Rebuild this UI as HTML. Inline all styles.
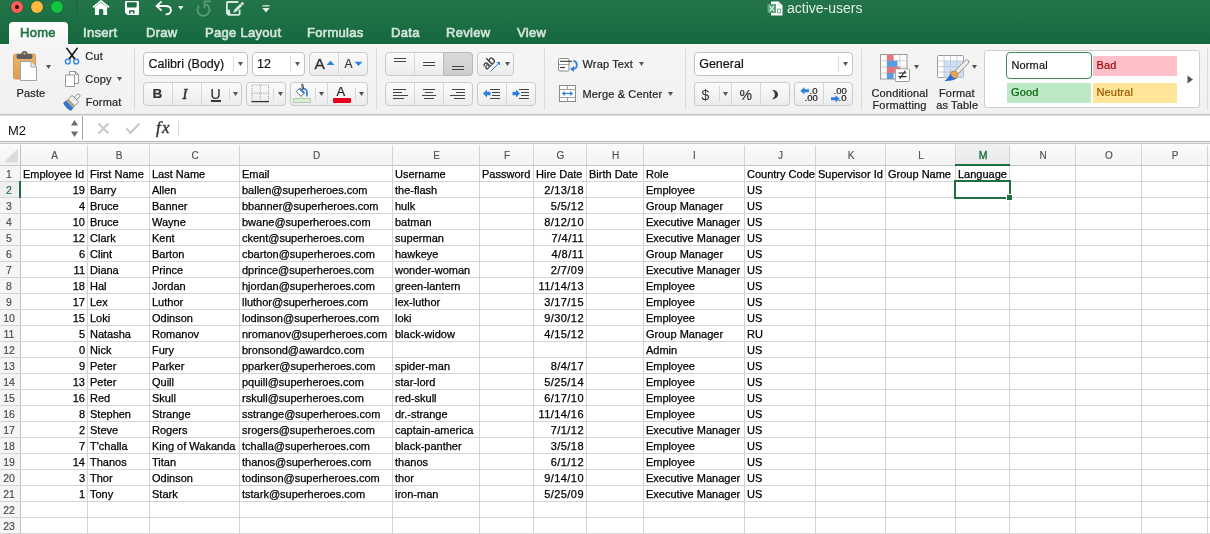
<!DOCTYPE html>
<html><head><meta charset="utf-8"><title>active-users</title>
<style>
*{box-sizing:border-box;margin:0;padding:0}
html,body{width:1210px;height:534px;overflow:hidden;background:#fff}
body{position:relative;font-family:"Liberation Sans",sans-serif;color:#000}
.a{position:absolute}
#root{position:absolute;left:0;top:0;width:1210px;height:534px;overflow:hidden;will-change:transform;background:#fff}
#title{position:absolute;left:0;top:0;width:1210px;height:44px;background:linear-gradient(#237549,#15673e)}
.tl{position:absolute;top:1px;width:12px;height:12px;border-radius:50%}
.tab{position:absolute;top:25px;font-size:13px;font-weight:normal;letter-spacing:0.3px;-webkit-text-stroke:0.6px currentColor;color:#d5e6dc;white-space:nowrap}
#ribbon{position:absolute;left:0;top:44px;width:1210px;height:70px;background:linear-gradient(#f5f5f5,#f1f1f1)}
#rbline{position:absolute;left:0;top:114px;width:1210px;height:1px;background:#c3c3c3;box-shadow:0 1px 0 #e2e2e2}
.rt{position:absolute;font-size:11px;color:#1a1a1a;white-space:nowrap}
.sep{position:absolute;top:48px;width:1px;height:61px;background:#dcdcdc}
.btn{position:absolute;border:1px solid #cacaca;border-radius:4px;background:linear-gradient(#fbfbfb,#ececec)}
.box{position:absolute;border:1px solid #c2c2c2;border-radius:4px;background:#fff}
.dv{position:absolute;width:1px;background:#d5d5d5}
.arr{position:absolute;width:0;height:0;border-left:3px solid transparent;border-right:3px solid transparent;border-top:4px solid #555}
#fbar{position:absolute;left:0;top:116px;width:1210px;height:25px;background:#fff}
.colhdr{position:absolute;left:0;width:1210px;background:linear-gradient(#fbfbfb,#f3f3f3)}
.rowhdr{position:absolute;left:0;width:20px;background:#f5f5f5}
.colsel{position:absolute;background:linear-gradient(#f2f2f2,#e9e9e9)}
.vl{position:absolute;width:1px;background:#d4d4d4}
.hl{position:absolute;height:1px;background:#d4d4d4}
.hb{background:#c6c6c6}
.cl{position:absolute;height:21px;line-height:23px;text-align:center;font-size:10px;color:#4f4f4f;padding-left:2px;-webkit-text-stroke:0.15px currentColor}
.cl.sel{color:#1e6e42;font-size:10.5px;-webkit-text-stroke:0.35px currentColor}
.rn{position:absolute;left:0;width:18px;height:16px;line-height:19px;text-align:center;font-size:10.5px;color:#4a4a4a;-webkit-text-stroke:0.15px currentColor}
.rn.sel{color:#1e6e42}
.c{position:absolute;height:16px;line-height:19px;font-size:11px;color:#000;white-space:nowrap;-webkit-text-stroke:0.25px #000}
.selbox{position:absolute;border:2px solid #1e6e42}
</style></head><body>

<div id="root">
<div id="title">
 <div class="tl" style="left:11px;background:#fc5f5b;box-shadow:0 0 0 0.6px #175a35"><div style="position:absolute;left:4px;top:3.8px;width:4px;height:4px;border-radius:50%;background:#3d0003"></div></div>
 <div class="tl" style="left:31px;background:#fdb93e;box-shadow:0 0 0 0.6px #175a35"></div>
 <div class="tl" style="left:51px;background:#10c440;box-shadow:0 0 0 0.6px #175a35"></div>
 <div class="a" style="left:76px;top:0;width:1px;height:16px;background:#1a6440"></div>

 <svg class="a" style="left:92px;top:0px" width="18" height="16"><path d="M0.9 7.4 L9 0.9 L17.1 7.4" stroke="#fff" stroke-width="1.7" fill="none"/><path d="M2.9 7 L9 2.6 L15.1 7 V15 H11.3 V10.2 Q11.3 8.7 9.1 8.7 Q6.9 8.7 6.9 10.2 V15 H2.9 Z" fill="#fff"/></svg>
 <svg class="a" style="left:124px;top:0px" width="16" height="16"><path d="M2.2 1 H13.8 Q15 1 15 2.2 V13.8 Q15 15 13.8 15 H3.4 L1 12.6 V2.2 Q1 1 2.2 1 Z" fill="#fff"/><path d="M2.9 2.2 H12.7 V6.8 Q12.7 7.6 11.9 7.6 H3.7 Q2.9 7.6 2.9 6.8 Z" fill="#1f6f44"/><path d="M5 13.8 V11.2 Q5 10.2 6 10.2 H9.6 Q10.6 10.2 10.6 11.2 V13.8 Z" fill="#1f6f44"/><path d="M6.4 13.8 V12.6 Q6.4 11.7 7.8 11.7 Q9.2 11.7 9.2 12.6 V13.8 Z" fill="#fff"/></svg>
 <svg class="a" style="left:155px;top:0px" width="18" height="16"><path d="M6.6 1.3 L1.6 6 L6.6 10.7" stroke="#fff" stroke-width="1.8" fill="none"/><path d="M2.2 6 H10.2 Q15.9 6 15.9 10.2 Q15.9 14.4 10.6 14.4" stroke="#fff" stroke-width="1.8" fill="none"/></svg>
 <svg class="a" style="left:178px;top:6px" width="6" height="4"><path d="M0 0 H5.5 L2.75 4Z" fill="#e8f0eb"/></svg>
 <svg class="a" style="left:196px;top:0px" width="16" height="17"><path d="M3 5.8 A6 6 0 1 0 8.6 3.9" stroke="#5c9b78" stroke-width="1.8" fill="none"/><path d="M8.5 8.2 V1.4 H14.8" stroke="#5c9b78" stroke-width="1.8" fill="none"/></svg>
 <svg class="a" style="left:225px;top:0px" width="20" height="16"><path d="M13.3 2 H3 Q1.9 2 1.9 3.1 V13.2 L3.4 14.9 H13.5 Q14.6 14.9 14.6 13.8 V9.5" stroke="#d9e8df" stroke-width="1.8" fill="none"/><path d="M1.9 9.5 H4.6 L5.6 13.9 L1.9 13.9Z" fill="#d9e8df"/><path d="M17.2 1.7 L19.2 3.7 L11.2 11.7 L8.2 12.8 L9.2 9.7 Z" fill="#d9e8df"/><path d="M15.4 3.5 L17.4 5.5" stroke="#1f6f44" stroke-width="0.8"/></svg>
 <svg class="a" style="left:262px;top:5px" width="8" height="8"><path d="M0.5 0.2 H7.5 V1.6 H0.5Z M0.3 2.9 H7.7 L4 7.4Z" fill="#e3eee7"/></svg>
 <svg class="a" style="left:767px;top:1px" width="16" height="15"><path d="M4 0.5 H11.5 L15.5 4.5 V14.5 H4Z" fill="#fff"/><path d="M11.5 0.5 V4.5 H15.5" fill="#ddd"/><rect x="0.5" y="3" width="8.5" height="9" fill="#5aa67a"/><path d="M2.5 5 L7 10 M7 5 L2.5 10" stroke="#fff" stroke-width="1.1"/><path d="M10.5 8 H13.5 V12 H10.5Z" fill="none" stroke="#5aa67a" stroke-width="0.9"/></svg>
 <div class="a" style="left:9px;top:22px;width:59px;height:22px;background:linear-gradient(#ffffff,#f5f5f5);border-radius:4px 4px 0 0"></div>
 <div class="tab" style="left:20px;color:#217346">Home</div>
 <div class="tab" style="left:83px">Insert</div>
 <div class="tab" style="left:146px">Draw</div>
 <div class="tab" style="left:205px">Page Layout</div>
 <div class="tab" style="left:307px">Formulas</div>
 <div class="tab" style="left:391px">Data</div>
 <div class="tab" style="left:446px">Review</div>
 <div class="tab" style="left:517px">View</div>
 <div class="a" style="left:787px;top:0px;font-size:14px;color:#e3efe7;white-space:nowrap">active-users</div>
</div>

<div id="ribbon"></div><div id="rbline"></div>
<svg class="a" style="left:12px;top:50px" width="26" height="32" viewBox="0 0 26 32"><defs><linearGradient id="gb" x1="0" y1="0" x2="0" y2="1"><stop offset="0" stop-color="#ecb46c"/><stop offset="1" stop-color="#dc9e52"/></linearGradient></defs><rect x="1.5" y="4" width="22" height="25" rx="1.8" fill="url(#gb)" stroke="#c98d45" stroke-width="0.8"/><path d="M4.5 5.5 Q4.5 4 6.5 4 H9.2 Q9.6 1 12.5 1 Q15.4 1 15.8 4 H18.5 Q20.5 4 20.5 5.5 V7.3 Q20.5 9 18.5 9 H6.5 Q4.5 9 4.5 7.3 Z" fill="#5e5e5e"/><ellipse cx="12.5" cy="3.6" rx="1.3" ry="1.1" fill="#e0a862"/><path d="M8.5 11.5 H19 L24.5 17 V30.5 H8.5 Z" fill="#fff" stroke="#9a9a9a" stroke-width="0.9"/><path d="M19 11.5 V17 H24.5" fill="#eee" stroke="#9a9a9a" stroke-width="0.9"/></svg>
<svg class="a" style="left:46px;top:65px" width="5" height="4"><path d="M0 0H5L2.5 4Z" fill="#555"/></svg>
<div class="a" style="left:16.5px;top:87.69px;font-size:11px;line-height:11px;color:#1f1f1f;white-space:nowrap;-webkit-text-stroke:0.2px #1f1f1f;letter-spacing:0.15px;">Paste</div>
<svg class="a" style="left:63px;top:47px" width="18" height="18" viewBox="0 0 18 18"><path d="M2.6 0.8 L4.4 0.8 L12.6 11.8 L11.2 12.8 Z M13.6 0.8 L15.4 0.8 L6.8 12.8 L5.4 11.8 Z" fill="#111"/><circle cx="4.8" cy="14.5" r="2.4" fill="#fff" stroke="#2f7fe0" stroke-width="1.4"/><circle cx="13.2" cy="14.5" r="2.4" fill="#fff" stroke="#2f7fe0" stroke-width="1.4"/></svg>
<div class="a" style="left:85.3px;top:50.69px;font-size:11px;line-height:11px;color:#1f1f1f;white-space:nowrap;-webkit-text-stroke:0.2px #1f1f1f;letter-spacing:0.15px;">Cut</div>
<svg class="a" style="left:64px;top:70px" width="16" height="18" viewBox="0 0 16 18"><path d="M5.5 1.5 H11.5 L14.5 4.5 V13.5 H5.5 Z" fill="#fff" stroke="#8c8c8c" stroke-width="0.9"/><path d="M11.5 1.5 V4.5 H14.5" fill="none" stroke="#8c8c8c" stroke-width="0.9"/><path d="M1.5 5 H10.5 V16.5 H1.5 Z" fill="#fff" stroke="#8c8c8c" stroke-width="0.9"/></svg>
<div class="a" style="left:85.3px;top:73.69px;font-size:11px;line-height:11px;color:#1f1f1f;white-space:nowrap;-webkit-text-stroke:0.2px #1f1f1f;letter-spacing:0.15px;">Copy</div>
<svg class="a" style="left:117px;top:77px" width="5" height="4"><path d="M0 0H5L2.5 4Z" fill="#555"/></svg>
<svg class="a" style="left:62px;top:93px" width="20" height="18" viewBox="0 0 20 18"><g transform="rotate(45 10 9)"><rect x="8.3" y="-1.5" width="3.4" height="6.5" rx="1.6" fill="#f4f4f4" stroke="#7a7a7a" stroke-width="0.8"/><rect x="5.3" y="4.2" width="9.4" height="5.6" rx="0.8" fill="#eeeeee" stroke="#7a7a7a" stroke-width="0.8"/><rect x="4.8" y="9.6" width="10.4" height="3" fill="#b9a489"/><path d="M4.6 12.4 H15.4 V15.6 Q10 17.6 4.6 15.6 Z" fill="#3177d6"/><path d="M4.6 15.2 Q10 17.2 15.4 15.2 V15.8 Q10 17.9 4.6 15.8Z" fill="#1d55aa"/></g></svg>
<div class="a" style="left:85.7px;top:96.69px;font-size:11px;line-height:11px;color:#1f1f1f;white-space:nowrap;-webkit-text-stroke:0.2px #1f1f1f;letter-spacing:0.15px;">Format</div>
<div class="a" style="left:134px;top:48px;width:1px;height:62px;background:#dadada"></div>
<div class="box" style="left:143px;top:52px;width:105px;height:24px;"></div>
<div class="a" style="left:233px;top:56px;width:1px;height:15px;background:#dedede"></div>
<svg class="a" style="left:238px;top:62px" width="5" height="4"><path d="M0 0H5L2.5 4Z" fill="#555"/></svg>
<div class="a" style="left:148.5px;top:58.02px;font-size:12.5px;line-height:12.5px;color:#111;white-space:nowrap;-webkit-text-stroke:0.2px #111;">Calibri (Body)</div>
<div class="box" style="left:252px;top:52px;width:53px;height:24px;"></div>
<div class="a" style="left:290px;top:56px;width:1px;height:15px;background:#dedede"></div>
<svg class="a" style="left:295px;top:62px" width="5" height="4"><path d="M0 0H5L2.5 4Z" fill="#555"/></svg>
<div class="a" style="left:257px;top:58.02px;font-size:12.5px;line-height:12.5px;color:#111;white-space:nowrap;-webkit-text-stroke:0.2px #111;">12</div>
<div class="btn" style="left:309px;top:52px;width:59px;height:24px;"></div>
<div class="a" style="left:338px;top:53px;width:1px;height:21px;background:#d6d6d6"></div>
<div class="a" style="left:314.5px;top:55.68px;font-size:15.5px;line-height:15.5px;color:#333;white-space:nowrap;-webkit-text-stroke:0.2px #333;-webkit-text-stroke:0.35px #333">A</div>
<svg class="a" style="left:326px;top:60px" width="9" height="6" viewBox="0 0 9 6"><path d="M0.5 5 L4.5 0.8 L8.5 5Z" fill="#2f7fe0"/></svg>
<div class="a" style="left:344.5px;top:58.04px;font-size:12px;line-height:12px;color:#333;white-space:nowrap;-webkit-text-stroke:0.2px #333;">A</div>
<svg class="a" style="left:354px;top:61px" width="9" height="6" viewBox="0 0 9 6"><path d="M0.5 0.8 L4.5 5 L8.5 0.8Z" fill="#2f7fe0"/></svg>
<div class="btn" style="left:143px;top:82px;width:99px;height:24px;"></div>
<div class="a" style="left:172px;top:83px;width:1px;height:22px;background:#d6d6d6"></div>
<div class="a" style="left:201px;top:83px;width:1px;height:22px;background:#d6d6d6"></div>
<div class="a" style="left:229px;top:88px;width:1px;height:12px;background:#d6d6d6"></div>
<div class="a" style="left:152.5px;top:87.37px;font-size:13.5px;line-height:13.5px;color:#333;white-space:nowrap;-webkit-text-stroke:0.2px #333;font-weight:bold">B</div>
<div class="a" style="left:182.5px;top:86.73px;font-size:14.5px;line-height:14.5px;color:#333;white-space:nowrap;-webkit-text-stroke:0.2px #333;font-family:'Liberation Serif',serif;font-style:italic;-webkit-text-stroke:0.5px #333">I</div>
<div class="a" style="left:210.5px;top:86.95px;font-size:14px;line-height:14px;color:#333;white-space:nowrap;-webkit-text-stroke:0.2px #333;">U</div>
<div class="a" style="left:211px;top:100px;width:10px;height:1.5px;background:#333"></div>
<svg class="a" style="left:232.5px;top:92px" width="5" height="4"><path d="M0 0H5L2.5 4Z" fill="#555"/></svg>
<div class="btn" style="left:246px;top:82px;width:40px;height:24px;"></div>
<div class="a" style="left:273px;top:88px;width:1px;height:12px;background:#d6d6d6"></div>
<svg class="a" style="left:251px;top:84px" width="19" height="19" viewBox="0 0 19 19"><rect x="1" y="1" width="16.5" height="16.5" fill="none" stroke="#888" stroke-width="0.9" stroke-dasharray="1 1.3"/><path d="M9.25 1 V17.5 M1 9.25 H17.5" stroke="#888" stroke-width="0.9" stroke-dasharray="1 1.3"/><path d="M0.5 17.6 H18" stroke="#333" stroke-width="1.3"/></svg>
<svg class="a" style="left:277.5px;top:92px" width="5" height="4"><path d="M0 0H5L2.5 4Z" fill="#555"/></svg>
<div class="btn" style="left:290px;top:82px;width:78px;height:24px;"></div>
<div class="a" style="left:315px;top:88px;width:1px;height:12px;background:#d6d6d6"></div>
<div class="a" style="left:327px;top:83px;width:1px;height:22px;background:#d6d6d6"></div>
<div class="a" style="left:355px;top:88px;width:1px;height:12px;background:#d6d6d6"></div>
<svg class="a" style="left:294px;top:83px" width="16" height="15" viewBox="0 0 16 15"><path d="M2.2 8.5 L6.9 13.4 L10.8 9.9 L5.9 5.2 Z" fill="#fff" stroke="#5a5a5a" stroke-width="0.9" stroke-linejoin="round"/><path d="M5.8 5.9 L10.1 10" stroke="#2f7fe0" stroke-width="1.9"/><path d="M8.6 6.8 Q7.2 1.2 8.2 0.9 Q9.4 0.6 9.5 6.5" stroke="#333" stroke-width="0.9" fill="none"/><path d="M10.6 5.8 Q13.6 6.2 12.9 12.6" stroke="#2f7fe0" stroke-width="1.7" fill="none" stroke-linecap="round"/></svg>
<div class="a" style="left:293px;top:98px;width:18px;height:5px;background:#dcecd6;border:0.5px solid #b5cfad"></div>
<svg class="a" style="left:319px;top:92px" width="5" height="4"><path d="M0 0H5L2.5 4Z" fill="#555"/></svg>
<div class="a" style="left:336.5px;top:84.80px;font-size:13px;line-height:13px;color:#222;white-space:nowrap;-webkit-text-stroke:0.2px #222;">A</div>
<div class="a" style="left:333px;top:98px;width:18px;height:5px;background:#e8001d;border-radius:1px"></div>
<svg class="a" style="left:359px;top:92px" width="5" height="4"><path d="M0 0H5L2.5 4Z" fill="#555"/></svg>
<div class="a" style="left:376px;top:48px;width:1px;height:62px;background:#dadada"></div>
<div class="btn" style="left:385px;top:52px;width:88px;height:24px;"></div>
<div class="a" style="left:443px;top:52px;width:30px;height:24px;border:1px solid #b9b9b9;border-radius:0 4px 4px 0;background:linear-gradient(#dadada,#cdcdcd)"></div>
<div class="a" style="left:414px;top:53px;width:1px;height:22px;background:#d6d6d6"></div>
<div class="a" style="left:394px;top:57.8px;width:12px;height:1.2px;background:#444"></div>
<div class="a" style="left:394px;top:61px;width:12px;height:1.2px;background:#444"></div>
<div class="a" style="left:423px;top:62px;width:12px;height:1.2px;background:#444"></div>
<div class="a" style="left:423px;top:65.2px;width:12px;height:1.2px;background:#444"></div>
<div class="a" style="left:452px;top:66px;width:12px;height:1.2px;background:#444"></div>
<div class="a" style="left:452px;top:69.2px;width:12px;height:1.2px;background:#444"></div>
<div class="btn" style="left:477px;top:52px;width:37px;height:24px;"></div>
<svg class="a" style="left:482px;top:56px" width="20" height="17" viewBox="0 0 20 17"><text x="0" y="0" transform="translate(4.8 14.2) rotate(-45)" font-family="Liberation Sans" font-size="12" fill="#333" stroke="#333" stroke-width="0.3">ab</text><path d="M8.5 15.5 L17.5 6.5" stroke="#2f7fe0" stroke-width="1"/><path d="M14.5 6 L18 6 L18 9.5Z" fill="#2f7fe0"/></svg>
<svg class="a" style="left:505px;top:62px" width="5" height="4"><path d="M0 0H5L2.5 4Z" fill="#555"/></svg>
<div class="btn" style="left:385px;top:82px;width:88px;height:24px;"></div>
<div class="a" style="left:414px;top:83px;width:1px;height:22px;background:#d6d6d6"></div>
<div class="a" style="left:443px;top:83px;width:1px;height:22px;background:#d6d6d6"></div>
<div class="a" style="left:393px;top:89px;width:13px;height:1.2px;background:#444"></div>
<div class="a" style="left:393px;top:92px;width:9px;height:1.2px;background:#444"></div>
<div class="a" style="left:393px;top:95px;width:15px;height:1.2px;background:#444"></div>
<div class="a" style="left:393px;top:98px;width:11px;height:1.2px;background:#444"></div>
<div class="a" style="left:423px;top:89px;width:12px;height:1.2px;background:#444"></div>
<div class="a" style="left:425px;top:92px;width:8px;height:1.2px;background:#444"></div>
<div class="a" style="left:422px;top:95px;width:14px;height:1.2px;background:#444"></div>
<div class="a" style="left:424px;top:98px;width:10px;height:1.2px;background:#444"></div>
<div class="a" style="left:452px;top:89px;width:13px;height:1.2px;background:#444"></div>
<div class="a" style="left:456px;top:92px;width:9px;height:1.2px;background:#444"></div>
<div class="a" style="left:450px;top:95px;width:15px;height:1.2px;background:#444"></div>
<div class="a" style="left:454px;top:98px;width:11px;height:1.2px;background:#444"></div>
<div class="btn" style="left:477px;top:82px;width:59px;height:24px;"></div>
<div class="a" style="left:506px;top:83px;width:1px;height:22px;background:#d6d6d6"></div>
<svg class="a" style="left:483px;top:89px" width="8" height="9" viewBox="0 0 8 9"><path d="M0 4.5 L4 0.5 V2.8 H7.5 V6.2 H4 V8.5 Z" fill="#2f7fe0"/></svg>
<div class="a" style="left:490px;top:89px;width:10px;height:1.2px;background:#444"></div>
<div class="a" style="left:492px;top:92px;width:8px;height:1.2px;background:#444"></div>
<div class="a" style="left:492px;top:95px;width:8px;height:1.2px;background:#444"></div>
<div class="a" style="left:490px;top:98px;width:10px;height:1.2px;background:#444"></div>
<svg class="a" style="left:512px;top:89px" width="8" height="9" viewBox="0 0 8 9"><path d="M8 4.5 L4 0.5 V2.8 H0.5 V6.2 H4 V8.5 Z" fill="#2f7fe0"/></svg>
<div class="a" style="left:519px;top:89px;width:10px;height:1.2px;background:#444"></div>
<div class="a" style="left:521px;top:92px;width:8px;height:1.2px;background:#444"></div>
<div class="a" style="left:521px;top:95px;width:8px;height:1.2px;background:#444"></div>
<div class="a" style="left:519px;top:98px;width:10px;height:1.2px;background:#444"></div>
<div class="a" style="left:544px;top:48px;width:1px;height:62px;background:#dadada"></div>
<svg class="a" style="left:557px;top:57px" width="23" height="15" viewBox="0 0 23 15"><rect x="1.5" y="1.5" width="10.5" height="12.5" rx="1" fill="#fff" stroke="#8a8a8a" stroke-width="1"/><path d="M1.5 7.5 H12" stroke="#8a8a8a" stroke-width="0.8"/><path d="M3 4.3 H15" stroke="#333" stroke-width="1.1"/><path d="M3 10.5 H8" stroke="#333" stroke-width="1.1"/><path d="M16.5 3.5 Q21 5.5 19.5 10 Q18.5 12 16 12" stroke="#2f7fe0" stroke-width="1.8" fill="none"/><path d="M13 12 L17 9 L17 15 Z" fill="#2f7fe0"/></svg>
<div class="a" style="left:582.5px;top:58.69px;font-size:11px;line-height:11px;color:#1f1f1f;white-space:nowrap;-webkit-text-stroke:0.2px #1f1f1f;letter-spacing:0.15px;">Wrap Text</div>
<svg class="a" style="left:639px;top:62px" width="5" height="4"><path d="M0 0H5L2.5 4Z" fill="#555"/></svg>
<svg class="a" style="left:558px;top:84px" width="19" height="19" viewBox="0 0 19 19"><rect x="1.5" y="1.5" width="16" height="16" fill="#fff" stroke="#8a8a8a" stroke-width="1"/><path d="M1.5 5.5 H17.5 M1.5 13.5 H17.5 M9.5 1.5 V5.5 M9.5 13.5 V17.5" stroke="#a0a0a0" stroke-width="1"/><path d="M6 9.5 H13" stroke="#2f7fe0" stroke-width="1.3"/><path d="M3.8 9.5 L6.8 7 V12Z M15.2 9.5 L12.2 7 V12Z" fill="#2f7fe0"/></svg>
<div class="a" style="left:582.5px;top:88.89px;font-size:11px;line-height:11px;color:#1f1f1f;white-space:nowrap;-webkit-text-stroke:0.2px #1f1f1f;letter-spacing:0.15px;">Merge &amp; Center</div>
<svg class="a" style="left:668px;top:92px" width="5" height="4"><path d="M0 0H5L2.5 4Z" fill="#555"/></svg>
<div class="a" style="left:685px;top:48px;width:1px;height:62px;background:#dadada"></div>
<div class="box" style="left:694px;top:52px;width:159px;height:24px;"></div>
<div class="a" style="left:838px;top:56px;width:1px;height:16px;background:#dedede"></div>
<svg class="a" style="left:843px;top:62px" width="5" height="4"><path d="M0 0H5L2.5 4Z" fill="#555"/></svg>
<div class="a" style="left:699.2px;top:58.22px;font-size:12.5px;line-height:12.5px;color:#111;white-space:nowrap;-webkit-text-stroke:0.2px #111;">General</div>
<div class="btn" style="left:694px;top:82px;width:96px;height:24px;"></div>
<div class="a" style="left:719px;top:86px;width:1px;height:16px;background:#d6d6d6"></div>
<div class="a" style="left:731px;top:83px;width:1px;height:22px;background:#d6d6d6"></div>
<div class="a" style="left:760px;top:83px;width:1px;height:22px;background:#d6d6d6"></div>
<div class="a" style="left:701.5px;top:87.65px;font-size:14px;line-height:14px;color:#333;white-space:nowrap;-webkit-text-stroke:0.2px #333;-webkit-text-stroke:0px">$</div>
<svg class="a" style="left:723px;top:92px" width="5" height="4"><path d="M0 0H5L2.5 4Z" fill="#555"/></svg>
<div class="a" style="left:739.5px;top:87.65px;font-size:14px;line-height:14px;color:#333;white-space:nowrap;-webkit-text-stroke:0.2px #333;">%</div>
<svg class="a" style="left:770px;top:89px" width="9" height="11" viewBox="0 0 9 11"><path d="M2 0.8 Q8 1.5 8 5.5 Q8 9.5 2 10.5 Q5 8 5 5.5 Q5 3 2 0.8Z" fill="#333"/></svg>
<div class="btn" style="left:794px;top:82px;width:59px;height:24px;"></div>
<div class="a" style="left:823px;top:83px;width:1px;height:22px;background:#d6d6d6"></div>
<svg class="a" style="left:800px;top:86.5px" width="10" height="8" viewBox="0 0 10 8"><path d="M0.3 3.8 L4.5 0.2 V2.3 H9 V5.3 H4.5 V7.4 Z" fill="#2f7fe0"/></svg>
<div class="a" style="left:809.5px;top:85.56px;font-size:9.5px;line-height:9.5px;color:#222;white-space:nowrap;-webkit-text-stroke:0.2px #222;">.0</div>
<div class="a" style="left:804.5px;top:92.56px;font-size:9.5px;line-height:9.5px;color:#222;white-space:nowrap;-webkit-text-stroke:0.2px #222;">.00</div>
<div class="a" style="left:833.5px;top:85.56px;font-size:9.5px;line-height:9.5px;color:#222;white-space:nowrap;-webkit-text-stroke:0.2px #222;">.00</div>
<svg class="a" style="left:829.5px;top:94.5px" width="10" height="8" viewBox="0 0 10 8"><path d="M9.7 3.8 L5.5 0.2 V2.3 H1 V5.3 H5.5 V7.4 Z" fill="#2f7fe0"/></svg>
<div class="a" style="left:838.5px;top:92.56px;font-size:9.5px;line-height:9.5px;color:#222;white-space:nowrap;-webkit-text-stroke:0.2px #222;">.0</div>
<div class="a" style="left:861px;top:48px;width:1px;height:62px;background:#dadada"></div>
<svg class="a" style="left:879px;top:53px" width="32" height="30" viewBox="0 0 32 30"><rect x="1.5" y="1.5" width="26.5" height="24.5" fill="#fff" stroke="#9a9a9a" stroke-width="1"/><path d="M8 1.5 V26 M14.2 1.5 V26 M20.8 1.5 V26 M1.5 7.7 H28 M1.5 13.9 H28 M1.5 20 H28" stroke="#c4c4c4" stroke-width="0.8"/><rect x="8" y="1.5" width="6.5" height="6.4" fill="#e8747b"/><rect x="8" y="7.7" width="10.5" height="6.3" fill="#5b9be6"/><rect x="8" y="13.9" width="13" height="6.2" fill="#e8747b"/><rect x="8" y="20" width="6.5" height="6" fill="#5b9be6"/><rect x="16.3" y="15.8" width="14.2" height="12.7" rx="0.8" fill="#fff" stroke="#8f8f8f" stroke-width="0.9"/><path d="M19.5 20 H27.5 M19.5 23.6 H27.5 M26.3 17.8 L20.7 25.8" stroke="#222" stroke-width="1.1"/></svg>
<svg class="a" style="left:914px;top:65px" width="5" height="4"><path d="M0 0H5L2.5 4Z" fill="#555"/></svg>
<div class="a" style="left:871.5px;top:87.69px;font-size:11px;line-height:11px;color:#1f1f1f;white-space:nowrap;-webkit-text-stroke:0.2px #1f1f1f;letter-spacing:0.15px;">Conditional</div>
<div class="a" style="left:872.5px;top:99.99px;font-size:11px;line-height:11px;color:#1f1f1f;white-space:nowrap;-webkit-text-stroke:0.2px #1f1f1f;letter-spacing:0.15px;">Formatting</div>
<svg class="a" style="left:936px;top:54px" width="36" height="28" viewBox="0 0 36 28"><rect x="1.5" y="1.5" width="26" height="22" rx="1" fill="#fff" stroke="#9a9a9a" stroke-width="1"/><rect x="8" y="7" width="19.5" height="16.5" fill="#cfe0f5"/><path d="M8 1.5 V23.5 M14.5 1.5 V23.5 M21 1.5 V23.5 M1.5 7 H27.5 M1.5 12.5 H27.5 M1.5 18 H27.5" stroke="#b8c4d2" stroke-width="0.8"/><path d="M31.5 6 Q34 6.5 32.5 9 L21.5 20.5 L18.5 17.5 L29.5 6.2 Q30.5 5.5 31.5 6Z" fill="#eee" stroke="#8a8a8a" stroke-width="0.9"/><circle cx="18" cy="21" r="4" fill="#e3a55a" stroke="#b9833f" stroke-width="0.7"/><path d="M14.5 19.5 Q16 24.5 21 24 Q17 27.5 8.5 27 Q12.5 24 14.5 19.5Z" fill="#2f6fd0"/></svg>
<svg class="a" style="left:972px;top:65px" width="5" height="4"><path d="M0 0H5L2.5 4Z" fill="#555"/></svg>
<div class="a" style="left:939px;top:87.69px;font-size:11px;line-height:11px;color:#1f1f1f;white-space:nowrap;-webkit-text-stroke:0.2px #1f1f1f;letter-spacing:0.15px;">Format</div>
<div class="a" style="left:936.2px;top:99.99px;font-size:11px;line-height:11px;color:#1f1f1f;white-space:nowrap;-webkit-text-stroke:0.2px #1f1f1f;letter-spacing:0.15px;">as Table</div>
<div class="a" style="left:984px;top:50px;width:216px;height:58px;background:#fff;border:1px solid #cfcfcf;border-radius:3px"></div>
<div class="a" style="left:1006px;top:52px;width:86px;height:27px;background:#fff;border:1.5px solid #3e8a5c;border-radius:4px"></div>
<div class="a" style="left:1093px;top:56px;width:84px;height:20px;background:#ffc0c9"></div>
<div class="a" style="left:1007px;top:83px;width:84px;height:20px;background:#bde9c6"></div>
<div class="a" style="left:1093px;top:83px;width:84px;height:20px;background:#fee598"></div>
<div class="a" style="left:1011.4px;top:59.99px;font-size:11px;line-height:11px;color:#111;white-space:nowrap;-webkit-text-stroke:0.2px #111;letter-spacing:0.15px;">Normal</div>
<div class="a" style="left:1096.5px;top:59.99px;font-size:11px;line-height:11px;color:#9c0006;white-space:nowrap;-webkit-text-stroke:0.2px #9c0006;letter-spacing:0.15px;">Bad</div>
<div class="a" style="left:1011px;top:86.99px;font-size:11px;line-height:11px;color:#006100;white-space:nowrap;-webkit-text-stroke:0.2px #006100;letter-spacing:0.15px;">Good</div>
<div class="a" style="left:1096.5px;top:86.99px;font-size:11px;line-height:11px;color:#9c5700;white-space:nowrap;-webkit-text-stroke:0.2px #9c5700;letter-spacing:0.15px;">Neutral</div>
<svg class="a" style="left:1187px;top:75px" width="7" height="9" viewBox="0 0 7 9"><path d="M0.5 0.5 L6 4.5 L0.5 8.5Z" fill="#555"/></svg>
<div class="a" style="left:1207px;top:48px;width:1px;height:62px;background:#dadada"></div>
<div id="fbar"></div>
<div class="a" style="left:82px;top:116px;width:1.2px;height:24px;background:#a8a8a8"></div>
<div class="a" style="left:0;top:141px;width:1210px;height:1px;background:#b4b4b4"></div>
<div class="a" style="left:0;top:142px;width:1210px;height:1px;background:#f2f2f2"></div>
<div class="a" style="left:0;top:143px;width:1210px;height:1px;background:#c4c4c4"></div>
<div class="a" style="left:8px;top:123.5px;font-size:13px;line-height:13px;color:#111;white-space:nowrap">M2</div>
<svg class="a" style="left:70px;top:119px" width="9" height="19"><path d="M1 6.5 L4.5 1 L8 6.5Z M1 12.5 L4.5 18 L8 12.5Z" fill="#6a6a6a"/></svg>
<svg class="a" style="left:97px;top:122px" width="13" height="13"><path d="M1.5 1.5 L11.5 11.5 M11.5 1.5 L1.5 11.5" stroke="#c8c8c8" stroke-width="2"/></svg>
<svg class="a" style="left:125px;top:122px" width="16" height="13"><path d="M1.5 6.5 L5.5 11 L14.5 1.5" stroke="#c8c8c8" stroke-width="2.1" fill="none"/></svg>
<div class="a" style="left:156px;top:118.5px;font-family:'Liberation Serif',serif;font-style:italic;font-size:17px;line-height:17px;color:#333;white-space:nowrap;letter-spacing:1.3px;-webkit-text-stroke:0.4px #333">fx</div>
<div class="a" style="left:178px;top:121px;width:1px;height:15px;background:#d8d8d8"></div>

<div class="colhdr" style="top:144px;height:21px"></div>
<svg class="a" style="left:3px;top:148px" width="16" height="15"><path d="M15 0.5 V14.5 H0.5Z" fill="#dcdcdc"/></svg>
<div class="rowhdr" style="top:165px;height:369px"></div>
<div class="colsel" style="left:955px;top:144px;width:54px;height:21px"></div>
<div class="a" style="left:0;top:181px;width:20px;height:16px;background:#efefef"></div>
<div class="vl" style="left:20px;top:145px;height:389px;background:#c2c2c2;"></div>
<div class="vl" style="left:87px;top:145px;height:389px;"></div>
<div class="vl" style="left:149px;top:145px;height:389px;"></div>
<div class="vl" style="left:239px;top:145px;height:389px;"></div>
<div class="vl" style="left:392px;top:145px;height:389px;"></div>
<div class="vl" style="left:479px;top:145px;height:389px;"></div>
<div class="vl" style="left:533px;top:145px;height:389px;"></div>
<div class="vl" style="left:586px;top:145px;height:389px;"></div>
<div class="vl" style="left:643px;top:145px;height:389px;"></div>
<div class="vl" style="left:744px;top:145px;height:389px;"></div>
<div class="vl" style="left:815px;top:145px;height:389px;"></div>
<div class="vl" style="left:885px;top:145px;height:389px;"></div>
<div class="vl" style="left:955px;top:145px;height:389px;"></div>
<div class="vl" style="left:1009px;top:145px;height:389px;"></div>
<div class="vl" style="left:1075px;top:145px;height:389px;"></div>
<div class="vl" style="left:1141px;top:145px;height:389px;"></div>
<div class="vl" style="left:1207px;top:145px;height:389px;"></div>
<div class="hl hb" style="left:0;top:165px;width:1210px"></div>
<div class="hl" style="left:0;top:181px;width:1210px"></div>
<div class="hl" style="left:0;top:197px;width:1210px"></div>
<div class="hl" style="left:0;top:213px;width:1210px"></div>
<div class="hl" style="left:0;top:229px;width:1210px"></div>
<div class="hl" style="left:0;top:245px;width:1210px"></div>
<div class="hl" style="left:0;top:261px;width:1210px"></div>
<div class="hl" style="left:0;top:277px;width:1210px"></div>
<div class="hl" style="left:0;top:293px;width:1210px"></div>
<div class="hl" style="left:0;top:309px;width:1210px"></div>
<div class="hl" style="left:0;top:325px;width:1210px"></div>
<div class="hl" style="left:0;top:341px;width:1210px"></div>
<div class="hl" style="left:0;top:357px;width:1210px"></div>
<div class="hl" style="left:0;top:373px;width:1210px"></div>
<div class="hl" style="left:0;top:389px;width:1210px"></div>
<div class="hl" style="left:0;top:405px;width:1210px"></div>
<div class="hl" style="left:0;top:421px;width:1210px"></div>
<div class="hl" style="left:0;top:437px;width:1210px"></div>
<div class="hl" style="left:0;top:453px;width:1210px"></div>
<div class="hl" style="left:0;top:469px;width:1210px"></div>
<div class="hl" style="left:0;top:485px;width:1210px"></div>
<div class="hl" style="left:0;top:501px;width:1210px"></div>
<div class="hl" style="left:0;top:517px;width:1210px"></div>
<div class="hl" style="left:0;top:533px;width:1210px"></div>
<div class="cl" style="left:20px;width:67px;top:144px">A</div>
<div class="cl" style="left:87px;width:62px;top:144px">B</div>
<div class="cl" style="left:149px;width:90px;top:144px">C</div>
<div class="cl" style="left:239px;width:153px;top:144px">D</div>
<div class="cl" style="left:392px;width:87px;top:144px">E</div>
<div class="cl" style="left:479px;width:54px;top:144px">F</div>
<div class="cl" style="left:533px;width:53px;top:144px">G</div>
<div class="cl" style="left:586px;width:57px;top:144px">H</div>
<div class="cl" style="left:643px;width:101px;top:144px">I</div>
<div class="cl" style="left:744px;width:71px;top:144px">J</div>
<div class="cl" style="left:815px;width:70px;top:144px">K</div>
<div class="cl" style="left:885px;width:70px;top:144px">L</div>
<div class="cl sel" style="left:955px;width:54px;top:144px">M</div>
<div class="cl" style="left:1009px;width:66px;top:144px">N</div>
<div class="cl" style="left:1075px;width:66px;top:144px">O</div>
<div class="cl" style="left:1141px;width:66px;top:144px">P</div>
<div style="position:absolute;left:955px;top:164px;width:55px;height:2px;background:#1e6e42"></div>
<div class="rn" style="top:165px">1</div>
<div class="rn sel" style="top:181px">2</div>
<div class="rn" style="top:197px">3</div>
<div class="rn" style="top:213px">4</div>
<div class="rn" style="top:229px">5</div>
<div class="rn" style="top:245px">6</div>
<div class="rn" style="top:261px">7</div>
<div class="rn" style="top:277px">8</div>
<div class="rn" style="top:293px">9</div>
<div class="rn" style="top:309px">10</div>
<div class="rn" style="top:325px">11</div>
<div class="rn" style="top:341px">12</div>
<div class="rn" style="top:357px">13</div>
<div class="rn" style="top:373px">14</div>
<div class="rn" style="top:389px">15</div>
<div class="rn" style="top:405px">16</div>
<div class="rn" style="top:421px">17</div>
<div class="rn" style="top:437px">18</div>
<div class="rn" style="top:453px">19</div>
<div class="rn" style="top:469px">20</div>
<div class="rn" style="top:485px">21</div>
<div class="rn" style="top:501px">22</div>
<div class="rn" style="top:517px">23</div>
<div style="position:absolute;left:19px;top:181px;width:2px;height:17px;background:#1e6e42"></div>
<div class="c" style="top:165px;left:23px">Employee Id</div>
<div class="c" style="top:165px;left:90px">First Name</div>
<div class="c" style="top:165px;left:152px">Last Name</div>
<div class="c" style="top:165px;left:242px">Email</div>
<div class="c" style="top:165px;left:395px">Username</div>
<div class="c" style="top:165px;left:482px">Password</div>
<div class="c" style="top:165px;left:536px">Hire Date</div>
<div class="c" style="top:165px;left:589px">Birth Date</div>
<div class="c" style="top:165px;left:646px">Role</div>
<div class="c" style="top:165px;left:747px">Country Code</div>
<div class="c" style="top:165px;left:818px">Supervisor Id</div>
<div class="c" style="top:165px;left:888px">Group Name</div>
<div class="c" style="top:165px;left:958px">Language</div>
<div class="c r" style="top:181px;right:1125px;">19</div>
<div class="c" style="top:181px;left:90px">Barry</div>
<div class="c" style="top:181px;left:152px">Allen</div>
<div class="c" style="top:181px;left:242px">ballen@superheroes.com</div>
<div class="c" style="top:181px;left:395px">the-flash</div>
<div class="c r" style="top:181px;right:626px;letter-spacing:0.45px;">2/13/18</div>
<div class="c" style="top:181px;left:646px">Employee</div>
<div class="c" style="top:181px;left:747px">US</div>
<div class="c r" style="top:197px;right:1125px;">4</div>
<div class="c" style="top:197px;left:90px">Bruce</div>
<div class="c" style="top:197px;left:152px">Banner</div>
<div class="c" style="top:197px;left:242px">bbanner@superheroes.com</div>
<div class="c" style="top:197px;left:395px">hulk</div>
<div class="c r" style="top:197px;right:626px;letter-spacing:0.45px;">5/5/12</div>
<div class="c" style="top:197px;left:646px">Group Manager</div>
<div class="c" style="top:197px;left:747px">US</div>
<div class="c r" style="top:213px;right:1125px;">10</div>
<div class="c" style="top:213px;left:90px">Bruce</div>
<div class="c" style="top:213px;left:152px">Wayne</div>
<div class="c" style="top:213px;left:242px">bwane@superheroes.com</div>
<div class="c" style="top:213px;left:395px">batman</div>
<div class="c r" style="top:213px;right:626px;letter-spacing:0.45px;">8/12/10</div>
<div class="c" style="top:213px;left:646px">Executive Manager</div>
<div class="c" style="top:213px;left:747px">US</div>
<div class="c r" style="top:229px;right:1125px;">12</div>
<div class="c" style="top:229px;left:90px">Clark</div>
<div class="c" style="top:229px;left:152px">Kent</div>
<div class="c" style="top:229px;left:242px">ckent@superheroes.com</div>
<div class="c" style="top:229px;left:395px">superman</div>
<div class="c r" style="top:229px;right:626px;letter-spacing:0.45px;">7/4/11</div>
<div class="c" style="top:229px;left:646px">Executive Manager</div>
<div class="c" style="top:229px;left:747px">US</div>
<div class="c r" style="top:245px;right:1125px;">6</div>
<div class="c" style="top:245px;left:90px">Clint</div>
<div class="c" style="top:245px;left:152px">Barton</div>
<div class="c" style="top:245px;left:242px">cbarton@superheroes.com</div>
<div class="c" style="top:245px;left:395px">hawkeye</div>
<div class="c r" style="top:245px;right:626px;letter-spacing:0.45px;">4/8/11</div>
<div class="c" style="top:245px;left:646px">Group Manager</div>
<div class="c" style="top:245px;left:747px">US</div>
<div class="c r" style="top:261px;right:1125px;">11</div>
<div class="c" style="top:261px;left:90px">Diana</div>
<div class="c" style="top:261px;left:152px">Prince</div>
<div class="c" style="top:261px;left:242px">dprince@superheroes.com</div>
<div class="c" style="top:261px;left:395px">wonder-woman</div>
<div class="c r" style="top:261px;right:626px;letter-spacing:0.45px;">2/7/09</div>
<div class="c" style="top:261px;left:646px">Executive Manager</div>
<div class="c" style="top:261px;left:747px">US</div>
<div class="c r" style="top:277px;right:1125px;">18</div>
<div class="c" style="top:277px;left:90px">Hal</div>
<div class="c" style="top:277px;left:152px">Jordan</div>
<div class="c" style="top:277px;left:242px">hjordan@superheroes.com</div>
<div class="c" style="top:277px;left:395px">green-lantern</div>
<div class="c r" style="top:277px;right:626px;letter-spacing:0.45px;">11/14/13</div>
<div class="c" style="top:277px;left:646px">Employee</div>
<div class="c" style="top:277px;left:747px">US</div>
<div class="c r" style="top:293px;right:1125px;">17</div>
<div class="c" style="top:293px;left:90px">Lex</div>
<div class="c" style="top:293px;left:152px">Luthor</div>
<div class="c" style="top:293px;left:242px">lluthor@superheroes.com</div>
<div class="c" style="top:293px;left:395px">lex-luthor</div>
<div class="c r" style="top:293px;right:626px;letter-spacing:0.45px;">3/17/15</div>
<div class="c" style="top:293px;left:646px">Employee</div>
<div class="c" style="top:293px;left:747px">US</div>
<div class="c r" style="top:309px;right:1125px;">15</div>
<div class="c" style="top:309px;left:90px">Loki</div>
<div class="c" style="top:309px;left:152px">Odinson</div>
<div class="c" style="top:309px;left:242px">lodinson@superheroes.com</div>
<div class="c" style="top:309px;left:395px">loki</div>
<div class="c r" style="top:309px;right:626px;letter-spacing:0.45px;">9/30/12</div>
<div class="c" style="top:309px;left:646px">Employee</div>
<div class="c" style="top:309px;left:747px">US</div>
<div class="c r" style="top:325px;right:1125px;">5</div>
<div class="c" style="top:325px;left:90px">Natasha</div>
<div class="c" style="top:325px;left:152px">Romanov</div>
<div class="c" style="top:325px;left:242px">nromanov@superheroes.com</div>
<div class="c" style="top:325px;left:395px">black-widow</div>
<div class="c r" style="top:325px;right:626px;letter-spacing:0.45px;">4/15/12</div>
<div class="c" style="top:325px;left:646px">Group Manager</div>
<div class="c" style="top:325px;left:747px">RU</div>
<div class="c r" style="top:341px;right:1125px;">0</div>
<div class="c" style="top:341px;left:90px">Nick</div>
<div class="c" style="top:341px;left:152px">Fury</div>
<div class="c" style="top:341px;left:242px">bronsond@awardco.com</div>
<div class="c" style="top:341px;left:646px">Admin</div>
<div class="c" style="top:341px;left:747px">US</div>
<div class="c r" style="top:357px;right:1125px;">9</div>
<div class="c" style="top:357px;left:90px">Peter</div>
<div class="c" style="top:357px;left:152px">Parker</div>
<div class="c" style="top:357px;left:242px">pparker@superheroes.com</div>
<div class="c" style="top:357px;left:395px">spider-man</div>
<div class="c r" style="top:357px;right:626px;letter-spacing:0.45px;">8/4/17</div>
<div class="c" style="top:357px;left:646px">Employee</div>
<div class="c" style="top:357px;left:747px">US</div>
<div class="c r" style="top:373px;right:1125px;">13</div>
<div class="c" style="top:373px;left:90px">Peter</div>
<div class="c" style="top:373px;left:152px">Quill</div>
<div class="c" style="top:373px;left:242px">pquill@superheroes.com</div>
<div class="c" style="top:373px;left:395px">star-lord</div>
<div class="c r" style="top:373px;right:626px;letter-spacing:0.45px;">5/25/14</div>
<div class="c" style="top:373px;left:646px">Employee</div>
<div class="c" style="top:373px;left:747px">US</div>
<div class="c r" style="top:389px;right:1125px;">16</div>
<div class="c" style="top:389px;left:90px">Red</div>
<div class="c" style="top:389px;left:152px">Skull</div>
<div class="c" style="top:389px;left:242px">rskull@superheroes.com</div>
<div class="c" style="top:389px;left:395px">red-skull</div>
<div class="c r" style="top:389px;right:626px;letter-spacing:0.45px;">6/17/10</div>
<div class="c" style="top:389px;left:646px">Employee</div>
<div class="c" style="top:389px;left:747px">US</div>
<div class="c r" style="top:405px;right:1125px;">8</div>
<div class="c" style="top:405px;left:90px">Stephen</div>
<div class="c" style="top:405px;left:152px">Strange</div>
<div class="c" style="top:405px;left:242px">sstrange@superheroes.com</div>
<div class="c" style="top:405px;left:395px">dr.-strange</div>
<div class="c r" style="top:405px;right:626px;letter-spacing:0.45px;">11/14/16</div>
<div class="c" style="top:405px;left:646px">Employee</div>
<div class="c" style="top:405px;left:747px">US</div>
<div class="c r" style="top:421px;right:1125px;">2</div>
<div class="c" style="top:421px;left:90px">Steve</div>
<div class="c" style="top:421px;left:152px">Rogers</div>
<div class="c" style="top:421px;left:242px">srogers@superheroes.com</div>
<div class="c" style="top:421px;left:395px">captain-america</div>
<div class="c r" style="top:421px;right:626px;letter-spacing:0.45px;">7/1/12</div>
<div class="c" style="top:421px;left:646px">Executive Manager</div>
<div class="c" style="top:421px;left:747px">US</div>
<div class="c r" style="top:437px;right:1125px;">7</div>
<div class="c" style="top:437px;left:90px">T'challa</div>
<div class="c" style="top:437px;left:152px">King of Wakanda</div>
<div class="c" style="top:437px;left:242px">tchalla@superheroes.com</div>
<div class="c" style="top:437px;left:395px">black-panther</div>
<div class="c r" style="top:437px;right:626px;letter-spacing:0.45px;">3/5/18</div>
<div class="c" style="top:437px;left:646px">Employee</div>
<div class="c" style="top:437px;left:747px">US</div>
<div class="c r" style="top:453px;right:1125px;">14</div>
<div class="c" style="top:453px;left:90px">Thanos</div>
<div class="c" style="top:453px;left:152px">Titan</div>
<div class="c" style="top:453px;left:242px">thanos@superheroes.com</div>
<div class="c" style="top:453px;left:395px">thanos</div>
<div class="c r" style="top:453px;right:626px;letter-spacing:0.45px;">6/1/12</div>
<div class="c" style="top:453px;left:646px">Employee</div>
<div class="c" style="top:453px;left:747px">US</div>
<div class="c r" style="top:469px;right:1125px;">3</div>
<div class="c" style="top:469px;left:90px">Thor</div>
<div class="c" style="top:469px;left:152px">Odinson</div>
<div class="c" style="top:469px;left:242px">todinson@superheroes.com</div>
<div class="c" style="top:469px;left:395px">thor</div>
<div class="c r" style="top:469px;right:626px;letter-spacing:0.45px;">9/14/10</div>
<div class="c" style="top:469px;left:646px">Executive Manager</div>
<div class="c" style="top:469px;left:747px">US</div>
<div class="c r" style="top:485px;right:1125px;">1</div>
<div class="c" style="top:485px;left:90px">Tony</div>
<div class="c" style="top:485px;left:152px">Stark</div>
<div class="c" style="top:485px;left:242px">tstark@superheroes.com</div>
<div class="c" style="top:485px;left:395px">iron-man</div>
<div class="c r" style="top:485px;right:626px;letter-spacing:0.45px;">5/25/09</div>
<div class="c" style="top:485px;left:646px">Executive Manager</div>
<div class="c" style="top:485px;left:747px">US</div>
<div class="selbox" style="left:954px;top:180px;width:57px;height:19px"></div>
<div style="position:absolute;left:1006px;top:194px;width:7px;height:7px;background:#1e6e42;border:1px solid #fff"></div>
</div></body></html>
